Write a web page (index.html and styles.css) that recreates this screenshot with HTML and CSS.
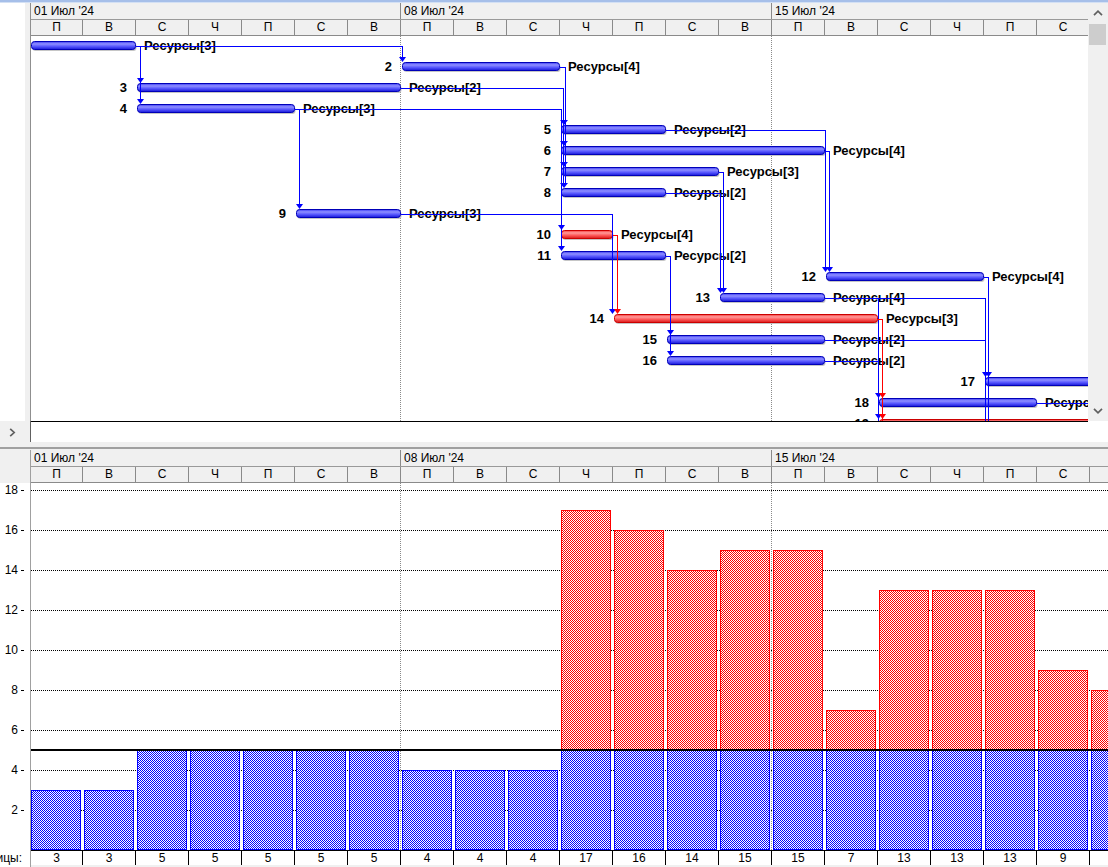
FILE: index.html
```html
<!DOCTYPE html>
<html lang="ru">
<head>
<meta charset="utf-8">
<title>Диаграмма Ганта и график ресурсов</title>
<link rel="stylesheet" href="styles.css">
</head>
<body>
<div class="window">
  <div class="titlebar"></div>

  <div class="pane-top">
    <div class="side-top"></div>
    <div class="chart chart-top">
      <div class="timescale">
        <div class="weeks">
          <div class="wk">01 Июл '24</div>
          <div class="wk">08 Июл '24</div>
          <div class="wk">15 Июл '24</div>
        </div>
        <div class="days">
          <div class="day">П</div><div class="day">В</div><div class="day">С</div><div class="day">Ч</div><div class="day">П</div><div class="day">С</div><div class="day">В</div>
          <div class="day">П</div><div class="day">В</div><div class="day">С</div><div class="day">Ч</div><div class="day">П</div><div class="day">С</div><div class="day">В</div>
          <div class="day">П</div><div class="day">В</div><div class="day">С</div><div class="day">Ч</div><div class="day">П</div><div class="day">С</div>
        </div>
      </div>
      <svg class="gantt-svg" width="1057" height="385" viewBox="31 37 1057 385">
        <defs>
          <linearGradient id="gBlue" x1="0" y1="0" x2="0" y2="1">
            <stop offset="0" stop-color="#3a3af6"/>
            <stop offset="0.3" stop-color="#9090ff"/>
            <stop offset="0.6" stop-color="#5a5aff"/>
            <stop offset="1" stop-color="#1818d8"/>
          </linearGradient>
          <linearGradient id="gRed" x1="0" y1="0" x2="0" y2="1">
            <stop offset="0" stop-color="#f43a3a"/>
            <stop offset="0.3" stop-color="#ff9a9a"/>
            <stop offset="0.6" stop-color="#ff5a5a"/>
            <stop offset="1" stop-color="#d81818"/>
          </linearGradient>
        </defs>

        <g class="week-line">
          <line x1="400.5" y1="37" x2="400.5" y2="422"/>
          <line x1="771.5" y1="37" x2="771.5" y2="422"/>
        </g>

        <g class="bar-shadow">
          <rect x="32.5" y="44" width="104" height="8" rx="3"/>
          <rect x="403.5" y="65" width="157" height="8" rx="3"/>
          <rect x="138.5" y="86" width="263" height="8" rx="3"/>
          <rect x="138.5" y="107" width="157" height="8" rx="3"/>
          <rect x="562.5" y="128" width="104" height="8" rx="3"/>
          <rect x="562.5" y="149" width="263" height="8" rx="3"/>
          <rect x="562.5" y="170" width="157" height="8" rx="3"/>
          <rect x="562.5" y="191" width="104" height="8" rx="3"/>
          <rect x="297.5" y="212" width="104" height="8" rx="3"/>
          <rect x="562.5" y="233" width="51" height="8" rx="3"/>
          <rect x="562.5" y="254" width="104" height="8" rx="3"/>
          <rect x="827.5" y="275" width="157" height="8" rx="3"/>
          <rect x="721.5" y="296" width="104" height="8" rx="3"/>
          <rect x="615.5" y="317" width="263" height="8" rx="3"/>
          <rect x="668.5" y="338" width="157" height="8" rx="3"/>
          <rect x="668.5" y="359" width="157" height="8" rx="3"/>
          <rect x="986.5" y="380" width="157" height="8" rx="3"/>
          <rect x="880.5" y="401" width="157" height="8" rx="3"/>
        </g>

        <g class="bar-blue">
          <rect x="31.5" y="42.5" width="104" height="8" rx="3"/>
          <rect x="402.5" y="63.5" width="157" height="8" rx="3"/>
          <rect x="137.5" y="84.5" width="263" height="8" rx="3"/>
          <rect x="137.5" y="105.5" width="157" height="8" rx="3"/>
          <rect x="561.5" y="126.5" width="104" height="8" rx="3"/>
          <rect x="561.5" y="147.5" width="263" height="8" rx="3"/>
          <rect x="561.5" y="168.5" width="157" height="8" rx="3"/>
          <rect x="561.5" y="189.5" width="104" height="8" rx="3"/>
          <rect x="296.5" y="210.5" width="104" height="8" rx="3"/>
          <rect x="561.5" y="252.5" width="104" height="8" rx="3"/>
          <rect x="826.5" y="273.5" width="157" height="8" rx="3"/>
          <rect x="720.5" y="294.5" width="104" height="8" rx="3"/>
          <rect x="667.5" y="336.5" width="157" height="8" rx="3"/>
          <rect x="667.5" y="357.5" width="157" height="8" rx="3"/>
          <rect x="985.5" y="378.5" width="157" height="8" rx="3"/>
          <rect x="879.5" y="399.5" width="157" height="8" rx="3"/>
        </g>
        <g class="bar-red">
          <rect x="561.5" y="231.5" width="51" height="8" rx="3"/>
          <rect x="614.5" y="315.5" width="263" height="8" rx="3"/>
          <rect x="879.5" y="420.5" width="300" height="8" rx="3"/>
        </g>

        <g class="task-id">
          <text x="392" y="72">2</text>
          <text x="127" y="93">3</text>
          <text x="127" y="114">4</text>
          <text x="551" y="135">5</text>
          <text x="551" y="156">6</text>
          <text x="551" y="177">7</text>
          <text x="551" y="198">8</text>
          <text x="286" y="219">9</text>
          <text x="551" y="240">10</text>
          <text x="551" y="261">11</text>
          <text x="816" y="282">12</text>
          <text x="710" y="303">13</text>
          <text x="604" y="324">14</text>
          <text x="657" y="345">15</text>
          <text x="657" y="366">16</text>
          <text x="975" y="387">17</text>
          <text x="869" y="408">18</text>
          <text x="869" y="429">19</text>
        </g>

        <g class="task-label">
          <text x="144" y="51">Ресурсы[3]</text>
          <text x="568" y="72">Ресурсы[4]</text>
          <text x="409" y="93">Ресурсы[2]</text>
          <text x="303" y="114">Ресурсы[3]</text>
          <text x="674" y="135">Ресурсы[2]</text>
          <text x="833" y="156">Ресурсы[4]</text>
          <text x="727" y="177">Ресурсы[3]</text>
          <text x="674" y="198">Ресурсы[2]</text>
          <text x="409" y="219">Ресурсы[3]</text>
          <text x="621" y="240">Ресурсы[4]</text>
          <text x="674" y="261">Ресурсы[2]</text>
          <text x="992" y="282">Ресурсы[4]</text>
          <text x="833" y="303">Ресурсы[4]</text>
          <text x="886" y="324">Ресурсы[3]</text>
          <text x="833" y="345">Ресурсы[2]</text>
          <text x="833" y="366">Ресурсы[2]</text>
          <text x="1045" y="408">Ресурсы[3]</text>
        </g>

        <g class="link">
          <path d="M136 47.5 H403 M140.5 47 V100 M402.5 47 V58"/>
          <path d="M560 68.5 H566 M565.5 68 V184"/>
          <path d="M401 89.5 H564 M563.5 89 V184"/>
          <path d="M295 110.5 H562 M561.5 110 V247"/>
          <path d="M299.5 110 V205"/>
          <path d="M401 215.5 H613 M612.5 215 V310"/>
          <path d="M666 257.5 H671 M670.5 257 V352"/>
          <path d="M666 131.5 H826 M825.5 131 V268"/>
          <path d="M825 152.5 H830 M829.5 152 V268"/>
          <path d="M719 173.5 H724 M723.5 173 V289"/>
          <path d="M666 194.5 H721 M720.5 194 V289"/>
          <path d="M825 299.5 H986 M878.5 299 V422 M985.5 299 V422"/>
          <path d="M984 278.5 H989 M988.5 278 V422"/>
          <path d="M825 341.5 H986"/>
          <path d="M825 362.5 H879"/>
          <path d="M1037 404.5 H1090"/>
        </g>
        <g class="link link-crit">
          <path d="M613 236.5 H618 M617.5 236 V310"/>
          <path d="M878 320.5 H883 M882.5 320 V422"/>
        </g>

        <g class="arrow">
          <polygon points="137,79 144,79 140.5,84"/>
          <polygon points="137,100 144,100 140.5,105"/>
          <polygon points="399,58 406,58 402.5,63"/>
          <polygon points="560,121 568,121 564,126"/>
          <polygon points="560,142 568,142 564,147"/>
          <polygon points="560,163 568,163 564,168"/>
          <polygon points="560,184 568,184 564,189"/>
          <polygon points="558,226 565,226 561.5,231"/>
          <polygon points="558,247 565,247 561.5,252"/>
          <polygon points="296,205 303,205 299.5,210"/>
          <polygon points="609,310 616,310 612.5,315"/>
          <polygon points="667,331 674,331 670.5,336"/>
          <polygon points="667,352 674,352 670.5,357"/>
          <polygon points="822,268 829,268 825.5,273"/>
          <polygon points="826,268 833,268 829.5,273"/>
          <polygon points="717,289 724,289 720.5,294"/>
          <polygon points="720,289 727,289 723.5,294"/>
          <polygon points="875,394 882,394 878.5,399"/>
          <polygon points="875,415 882,415 878.5,420"/>
          <polygon points="982,373 989,373 985.5,378"/>
          <polygon points="985,373 992,373 988.5,378"/>
        </g>
        <g class="arrow arrow-crit">
          <polygon points="614,310 621,310 617.5,315"/>
          <polygon points="879,394 886,394 882.5,399"/>
          <polygon points="879,415 886,415 882.5,420"/>
        </g>
      </svg>
    </div>
    <div class="vscroll">
      <div class="vs-btn">
        <svg width="10" height="6" viewBox="0 0 10 6"><polyline class="chev" points="1,5.2 5,1.2 9,5.2"/></svg>
      </div>
      <div class="vs-thumb"></div>
      <div class="vs-track"></div>
      <div class="vs-btn">
        <svg width="10" height="6" viewBox="0 0 10 6"><polyline class="chev" points="1,0.8 5,4.8 9,0.8"/></svg>
      </div>
    </div>
  </div>

  <div class="hrow">
    <div class="side-hs">
      <svg width="7" height="9" viewBox="0 0 7 9"><polyline class="chev" points="1.2,0.8 5.2,4.5 1.2,8.2"/></svg>
    </div>
    <div class="hs-track"></div>
    <div class="hs-corner"></div>
  </div>

  <div class="splitter"></div>

  <div class="pane-bottom">
    <div class="axis">
      <div class="axis-head"></div>
      <div class="ticks">
        <div class="tick"><span>18</span><i></i></div>
        <div class="tick"><span>16</span><i></i></div>
        <div class="tick"><span>14</span><i></i></div>
        <div class="tick"><span>12</span><i></i></div>
        <div class="tick"><span>10</span><i></i></div>
        <div class="tick"><span>8</span><i></i></div>
        <div class="tick"><span>6</span><i></i></div>
        <div class="tick"><span>4</span><i></i></div>
        <div class="tick"><span>2</span><i></i></div>
      </div>
      <div class="units"><span>ицы:</span></div>
    </div>
    <div class="chart chart-bottom">
      <div class="timescale">
        <div class="weeks">
          <div class="wk">01 Июл '24</div>
          <div class="wk">08 Июл '24</div>
          <div class="wk">15 Июл '24</div>
        </div>
        <div class="days">
          <div class="day">П</div><div class="day">В</div><div class="day">С</div><div class="day">Ч</div><div class="day">П</div><div class="day">С</div><div class="day">В</div>
          <div class="day">П</div><div class="day">В</div><div class="day">С</div><div class="day">Ч</div><div class="day">П</div><div class="day">С</div><div class="day">В</div>
          <div class="day">П</div><div class="day">В</div><div class="day">С</div><div class="day">Ч</div><div class="day">П</div><div class="day">С</div><div class="day"></div>
        </div>
      </div>
      <svg class="hist-svg" width="1077" height="367" viewBox="31 483 1077 367">
        <defs>
          <pattern id="pBlue" width="2" height="2" patternUnits="userSpaceOnUse">
            <rect class="px" width="2" height="2" fill="#ffffff"/>
            <rect class="px" width="1" height="1" fill="#0000ff"/>
            <rect class="px" x="1" y="1" width="1" height="1" fill="#0000ff"/>
          </pattern>
          <pattern id="pRed" width="2" height="2" patternUnits="userSpaceOnUse">
            <rect class="px" width="2" height="2" fill="#ffffff"/>
            <rect class="px" width="1" height="1" fill="#ff0000"/>
            <rect class="px" x="1" y="1" width="1" height="1" fill="#ff0000"/>
          </pattern>
        </defs>
        <g class="grid-line">
          <line x1="31" y1="490.5" x2="1108" y2="490.5"/>
          <line x1="31" y1="530.5" x2="1108" y2="530.5"/>
          <line x1="31" y1="570.5" x2="1108" y2="570.5"/>
          <line x1="31" y1="610.5" x2="1108" y2="610.5"/>
          <line x1="31" y1="650.5" x2="1108" y2="650.5"/>
          <line x1="31" y1="690.5" x2="1108" y2="690.5"/>
          <line x1="31" y1="730.5" x2="1108" y2="730.5"/>
          <line x1="31" y1="770.5" x2="1108" y2="770.5"/>
          <line x1="31" y1="810.5" x2="1108" y2="810.5"/>
        </g>
        <g class="week-line">
          <line x1="400.5" y1="483" x2="400.5" y2="850"/>
          <line x1="771.5" y1="483" x2="771.5" y2="850"/>
        </g>
        <g class="hbar-blue">
          <rect x="31.5" y="790.5" width="49" height="59"/>
          <rect x="84.5" y="790.5" width="49" height="59"/>
          <rect x="137.5" y="750.5" width="49" height="99"/>
          <rect x="190.5" y="750.5" width="49" height="99"/>
          <rect x="243.5" y="750.5" width="49" height="99"/>
          <rect x="296.5" y="750.5" width="49" height="99"/>
          <rect x="349.5" y="750.5" width="49" height="99"/>
          <rect x="402.5" y="770.5" width="49" height="79"/>
          <rect x="455.5" y="770.5" width="49" height="79"/>
          <rect x="508.5" y="770.5" width="49" height="79"/>
          <rect x="561.5" y="750.5" width="49" height="99"/>
          <rect x="614.5" y="750.5" width="49" height="99"/>
          <rect x="667.5" y="750.5" width="49" height="99"/>
          <rect x="720.5" y="750.5" width="49" height="99"/>
          <rect x="773.5" y="750.5" width="49" height="99"/>
          <rect x="826.5" y="750.5" width="49" height="99"/>
          <rect x="879.5" y="750.5" width="49" height="99"/>
          <rect x="932.5" y="750.5" width="49" height="99"/>
          <rect x="985.5" y="750.5" width="49" height="99"/>
          <rect x="1038.5" y="750.5" width="49" height="99"/>
          <rect x="1091.5" y="750.5" width="49" height="99"/>
        </g>
        <g class="hbar-red">
          <rect x="561.5" y="510.5" width="49" height="239"/>
          <rect x="614.5" y="530.5" width="49" height="219"/>
          <rect x="667.5" y="570.5" width="49" height="179"/>
          <rect x="720.5" y="550.5" width="49" height="199"/>
          <rect x="773.5" y="550.5" width="49" height="199"/>
          <rect x="826.5" y="710.5" width="49" height="39"/>
          <rect x="879.5" y="590.5" width="49" height="159"/>
          <rect x="932.5" y="590.5" width="49" height="159"/>
          <rect x="985.5" y="590.5" width="49" height="159"/>
          <rect x="1038.5" y="670.5" width="49" height="79"/>
          <rect x="1091.5" y="690.5" width="49" height="59"/>
        </g>
        <rect class="capacity" x="31" y="749" width="1077" height="2"/>
      </svg>
      <div class="counts">
        <div class="cnt">3</div><div class="cnt">3</div><div class="cnt">5</div><div class="cnt">5</div><div class="cnt">5</div><div class="cnt">5</div><div class="cnt">5</div>
        <div class="cnt">4</div><div class="cnt">4</div><div class="cnt">4</div><div class="cnt">17</div><div class="cnt">16</div><div class="cnt">14</div><div class="cnt">15</div>
        <div class="cnt">15</div><div class="cnt">7</div><div class="cnt">13</div><div class="cnt">13</div><div class="cnt">13</div><div class="cnt">9</div><div class="cnt"></div>
      </div>
    </div>
  </div>
</div>
</body>
</html>
```

FILE: styles.css
```css
html, body {
  margin: 0;
  padding: 0;
}

body {
  width: 1108px;
  height: 867px;
  overflow: hidden;
  background: #f0f0f0;
  font-family: "Liberation Sans", Arial, sans-serif;
  font-size: 12px;
  color: #000;
}

.window {
  display: flex;
  flex-direction: column;
  width: 1108px;
  height: 867px;
}

.titlebar {
  height: 3px;
  background: #a6bfe9;
  border-bottom: 1px solid #d3e0f4;
}

/* ---------- top (Gantt) pane ---------- */
.pane-top {
  display: flex;
  height: 418px;
}

.side-top {
  width: 30px;
  flex: none;
  border-right: 1px solid #8f8f8f;
  background: linear-gradient(to right, #ffffff 25px, #f0f0f0 25px);
}

.chart {
  display: flex;
  flex-direction: column;
  overflow: hidden;
  background: #fff;
}

.chart-top {
  width: 1057px;
  flex: none;
}

.timescale {
  background: #f0f0f0;
  flex: none;
}

.weeks {
  display: grid;
  grid-template-columns: 370px 371px 371px;
  height: 16px;
  border-bottom: 1px solid #9a9a9a;
}

.wk {
  border-right: 1px solid #8a8a8a;
  padding-left: 3px;
  line-height: 16px;
  white-space: nowrap;
  overflow: hidden;
}

.days {
  display: grid;
  grid-template-columns: 52px repeat(20, 53px);
  height: 15px;
  border-bottom: 1px solid #8a8a8a;
}

.day {
  border-right: 1px solid #8a8a8a;
  text-align: center;
  line-height: 15px;
}

.gantt-svg,
.hist-svg {
  display: block;
  flex: none;
  background: #fff;
}

.week-line line {
  stroke: #8a8a8a;
  stroke-width: 1;
  stroke-dasharray: 1 1;
  shape-rendering: crispEdges;
}

.bar-shadow rect {
  fill: #c6c6c6;
}

.bar-blue rect {
  fill: url(#gBlue);
  stroke: #0000b8;
  stroke-width: 1;
}

.bar-red rect {
  fill: url(#gRed);
  stroke: #cc0000;
  stroke-width: 1;
}

.task-id text {
  font-family: "Liberation Sans", Arial, sans-serif;
  font-size: 13px;
  font-weight: bold;
  text-anchor: end;
  fill: #000;
}

.task-label text {
  font-family: "Liberation Sans", Arial, sans-serif;
  font-size: 13px;
  font-weight: bold;
  fill: #000;
}

.link path {
  fill: none;
  stroke: #0000ff;
  stroke-width: 1;
  shape-rendering: crispEdges;
}

.link-crit path {
  stroke: #ff0000;
}

.arrow polygon {
  fill: #0000ff;
}

.arrow-crit polygon {
  fill: #ff0000;
}

/* vertical scrollbar */
.vscroll {
  width: 20px;
  flex: none;
  background: #f0f0f0;
  display: flex;
  flex-direction: column;
}

.vs-btn {
  height: 20px;
  display: flex;
  align-items: center;
  justify-content: center;
  flex: none;
}

.vs-btn svg {
  display: block;
}

.chev {
  fill: none;
  stroke: #606060;
  stroke-width: 1.7;
}

.vs-thumb {
  height: 21px;
  margin: 1px 2px 0 1px;
  background: #cdcdcd;
  flex: none;
}

.vs-track {
  flex: 1;
}

/* horizontal scroll row */
.hrow {
  display: flex;
  height: 21px;
  flex: none;
}

.side-hs {
  width: 21px;
  padding-left: 9px;
  flex: none;
  background: #f0f0f0;
  border-right: 1px solid #606060;
  display: flex;
  align-items: center;
  padding-top: 1px;
  box-sizing: content-box;
}

.side-hs svg {
  display: block;
}

.hs-track {
  width: 1057px;
  flex: none;
  background: #fff;
  border-top: 1px solid #000;
}

.hs-corner {
  flex: 1;
  background: #fff;
}

.splitter {
  height: 8px;
  flex: none;
  background: linear-gradient(#f0f0f0 0 5px, #a0a0a0 5px 7px, #f0f0f0 7px);
}

/* ---------- bottom (resource graph) pane ---------- */
.pane-bottom {
  display: flex;
  height: 417px;
  flex: none;
}

.axis {
  width: 30px;
  flex: none;
  border-right: 1px solid #a0a0a0;
  background: #fff;
  display: flex;
  flex-direction: column;
}

.axis-head {
  height: 33px;
  flex: none;
  background: #f0f0f0;
}

.ticks {
  display: flex;
  flex-direction: column;
  gap: 26px;
}

.tick {
  height: 14px;
  line-height: 14px;
  display: flex;
  align-items: center;
  justify-content: flex-end;
  padding-right: 6px;
}

.tick i {
  display: block;
  width: 3px;
  height: 1px;
  background: #000;
  margin-left: 3px;
}

.units {
  margin-top: auto;
  margin-bottom: 2px;
  height: 14px;
  line-height: 14px;
  display: flex;
  justify-content: flex-end;
  padding-right: 8px;
  white-space: nowrap;
}

.chart-bottom {
  width: 1077px;
  flex: none;
  background: #f0f0f0;
}

.px {
  shape-rendering: crispEdges;
}

.grid-line line {
  stroke: #000;
  stroke-width: 1;
  stroke-dasharray: 1 1;
  shape-rendering: crispEdges;
}

.hbar-blue rect {
  fill: url(#pBlue);
  stroke: #0000ff;
  stroke-width: 1;
  shape-rendering: crispEdges;
}

.hbar-red rect {
  fill: url(#pRed);
  stroke: #ff0000;
  stroke-width: 1;
  shape-rendering: crispEdges;
}

.capacity {
  fill: #000;
}

.counts {
  display: grid;
  grid-template-columns: 52px repeat(20, 53px);
  height: 14px;
  border-top: 1px solid #000;
  background: #fff;
  flex: none;
}

.cnt {
  border-right: 1px solid #000;
  text-align: center;
  line-height: 14px;
}
```
